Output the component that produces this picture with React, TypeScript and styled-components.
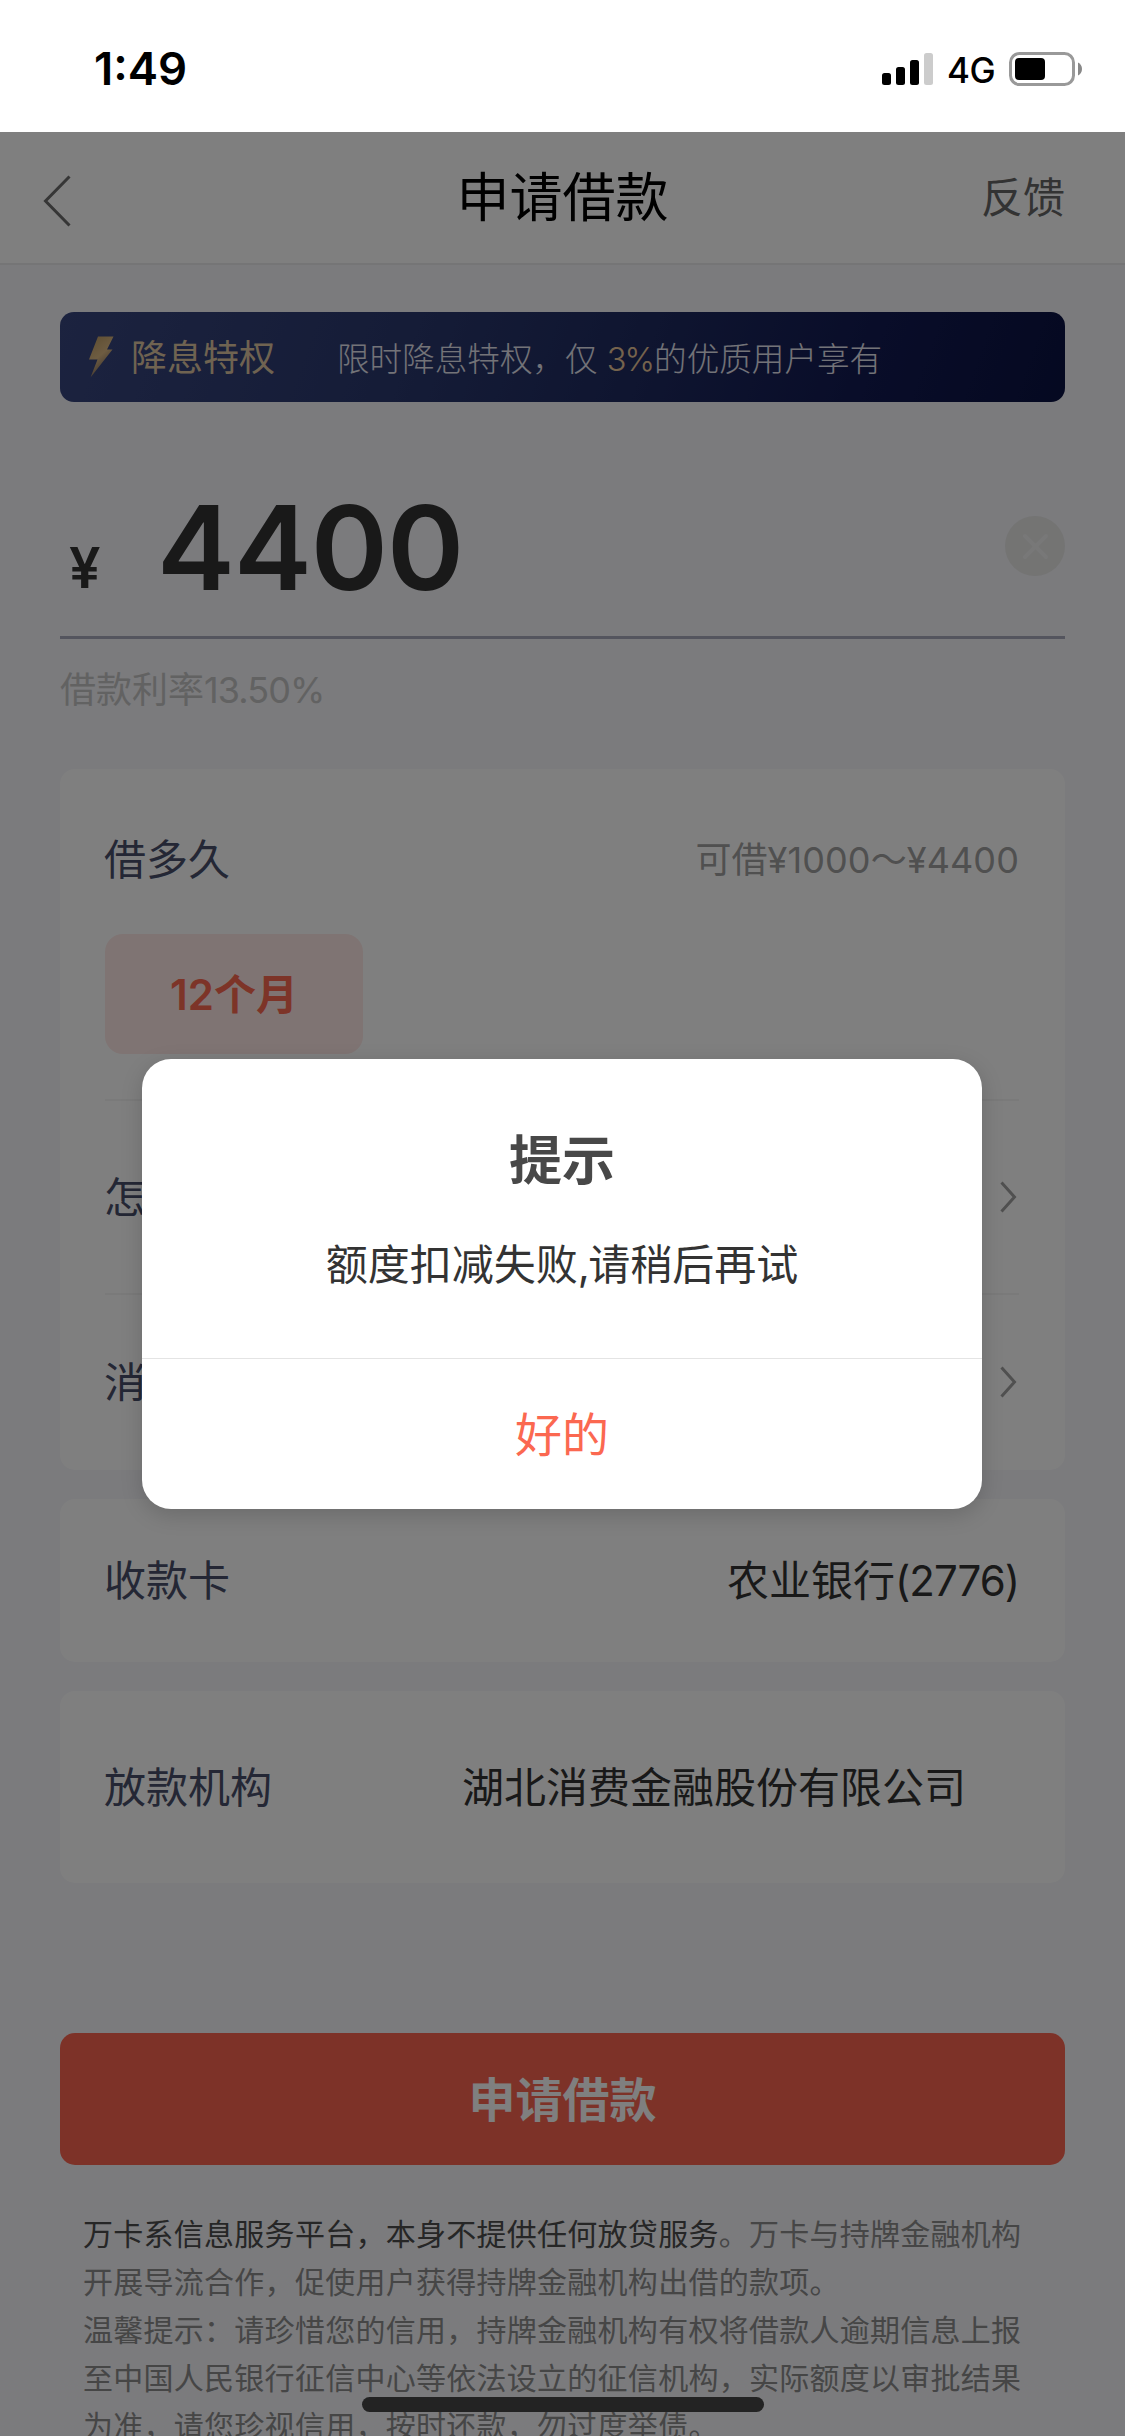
import React from 'react';
import styled, { createGlobalStyle } from 'styled-components';

const GlobalStyle = createGlobalStyle`
  * { box-sizing: border-box; }
  html, body { margin: 0; padding: 0; }
  body {
    width: 1125px;
    height: 2436px;
    overflow: hidden;
    font-family: Inter, "Noto Sans CJK SC", sans-serif;
  }
  button { font: inherit; border: 0; padding: 0; background: none; }
`;

const Screen = styled.div`
  position: relative;
  display: flex;
  flex-direction: column;
  width: 1125px;
  height: 2436px;
  overflow: hidden;
  background: #f6f6fa;
`;

const StatusBar = styled.header`
  flex: none;
  height: 132px;
  padding: 6px 43px 0 94px;
  background: #fff;
  display: flex;
  align-items: center;
  justify-content: space-between;
`;

const Clock = styled.span`
  font-size: 45.5px;
  font-weight: 600;
  line-height: 54px;
  color: #000;
`;

const StatusIcons = styled.div`
  display: flex;
  align-items: center;
  height: 34px;
`;

const Network = styled.span`
  margin: 0 13px 0 14px;
  width: 49px;
  font-size: 35px;
  font-weight: 500;
  letter-spacing: -0.5px;
  line-height: 36px;
  padding-top: 2px;
  white-space: nowrap;
  color: #000;
`;

const NavBar = styled.nav`
  flex: none;
  display: grid;
  grid-template-columns: 160px 1fr 160px;
  align-items: center;
  height: 133px;
  padding: 0 60px 0 43px;
  background: #fff;
  border-bottom: 2px solid #eaeaec;
`;

const BackButton = styled.button`
  justify-self: start;
  height: 52px;
  margin-top: 6px;
  svg { display: block; }
`;

const NavTitle = styled.h1`
  margin: 0 0 0 17px;
  text-align: center;
  font-size: 53px;
  font-weight: 400;
  line-height: 60px;
  color: #000;
`;

const NavLink = styled.button`
  justify-self: end;
  font-size: 42px;
  line-height: 60px;
  color: #666;
`;

const Content = styled.main`
  flex: 1;
  display: flex;
  flex-direction: column;
  padding: 47px 60px 0;
`;

const Banner = styled.section`
  flex: none;
  display: flex;
  align-items: center;
  height: 90px;
  padding-left: 29px;
  border-radius: 14px;
  background: linear-gradient(110deg, #38467f 0%, #2a386e 35%, #1e2a60 58%, #121a52 80%, #0a1242 100%);
`;

const BannerTitle = styled.strong`
  width: 206px;
  margin: 2px 0 0 17px;
  font-size: 36px;
  line-height: 48px;
  font-weight: 400;
  color: #dfc6a2;
`;

const BannerText = styled.span`
  margin-top: 3px;
  font-size: 32.6px;
  font-weight: 300;
  line-height: 48px;
  color: #e6e6f0;
  white-space: nowrap;
  em { font-style: normal; letter-spacing: -2px; margin-right: 1px; color: #eac79a; }
`;

const AmountRow = styled.section`
  flex: none;
  display: flex;
  align-items: flex-end;
  height: 237px;
  padding-left: 9px;
  border-bottom: 3px solid #a9abbd;
  color: #333;
`;

const Currency = styled.span`
  width: 88px;
  font-size: 56px;
  font-weight: 600;
  line-height: 64px;
  margin-bottom: 36px;
`;

const Amount = styled.span`
  flex: 1;
  font-size: 117px;
  font-weight: 600;
  line-height: 140px;
  margin-bottom: 18px;
  letter-spacing: -1px;
`;

const ClearButton = styled.button`
  width: 60px;
  height: 60px;
  margin-bottom: 60px;
  svg { display: block; }
`;

const Rate = styled.p`
  flex: none;
  margin: 24px 0 0;
  height: 106px;
  font-size: 36px;
  line-height: 54px;
  color: #c4c4c4;
`;

const Digits = styled.span<{ $tracking: number }>`
  letter-spacing: ${(p) => p.$tracking}px;
`;

const Card = styled.section<{ $height: number }>`
  flex: none;
  height: ${(p) => p.$height}px;
  margin-bottom: 29px;
  padding: 0 46px 0 45px;
  border-radius: 15px;
  background: #fff;
`;

const Row = styled.div<{ $height: number; $divided?: boolean }>`
  display: flex;
  align-items: center;
  justify-content: space-between;
  height: ${(p) => p.$height}px;
  border-bottom: ${(p) => (p.$divided ? '2px solid #f4f4f4' : '0')};
  svg { margin-right: 2px; }
`;

const TermBlock = styled.div`
  height: 332px;
  padding-top: 59px;
  border-bottom: 2px solid #f4f4f4;
`;

const Label = styled.span`
  margin-left: -1px;
  padding-top: 1px;
  font-size: 42px;
  line-height: 62px;
  color: #484e6a;
`;

const Value = styled.span<{ $inset?: number }>`
  padding-top: 1px;
  font-size: 42px;
  line-height: 62px;
  margin-right: ${(p) => p.$inset ?? 0}px;
  color: #333;
`;

const Hint = styled.span`
  padding-top: 2px;
  font-size: 36px;
  letter-spacing: 0.1px;
  line-height: 54px;
  color: #a0a0a0;
`;

const TermChip = styled.button`
  display: block;
  width: 258px;
  height: 120px;
  margin-top: 44px;
  border-radius: 18px;
  background: #ffe8e6;
  color: #fb6850;
  font-size: 42px;
  font-weight: 600;
  line-height: 121px;
`;

const SubmitButton = styled.button`
  flex: none;
  height: 132px;
  margin-top: 121px;
  border-radius: 15px;
  background: #fb6450;
  color: #fff;
  font-size: 47px;
  font-weight: 600;
  line-height: 133px;
`;

const Terms = styled.p`
  flex: none;
  margin: 45px 0 0;
  padding-left: 23px;
  font-size: 30px;
  letter-spacing: 0.27px;
  line-height: 48px;
  color: #8c8c8c;
  white-space: nowrap;
  b { font-weight: 400; color: #4c4c4c; }
`;

const Mask = styled.div`
  position: absolute;
  inset: 132px 0 0;
  display: flex;
  justify-content: center;
  align-items: flex-start;
  padding: 927px 1px 0 0;
  background: rgba(0, 0, 0, 0.5);
`;

const Dialog = styled.div`
  display: flex;
  flex-direction: column;
  width: 840px;
  height: 450px;
  border-radius: 29px;
  background: #fff;
  box-shadow: 0 6px 22px rgba(0, 0, 0, 0.16);
  text-align: center;
`;

const DialogTitle = styled.h2`
  margin: 67px 0 0;
  font-size: 53px;
  font-weight: 700;
  line-height: 70px;
  color: #484848;
`;

const DialogText = styled.p`
  flex: 1;
  margin: 38px 0 0;
  font-size: 42px;
  line-height: 62px;
  color: #333;
`;

const DialogButton = styled.button`
  height: 151px;
  border-top: 1px solid #e4e4e4;
  font-size: 47px;
  line-height: 149px;
  color: #fb6850;
`;

const HomeIndicator = styled.div`
  position: absolute;
  left: 362px;
  top: 2397px;
  width: 402px;
  height: 15px;
  border-radius: 8px;
  background: #232323;
`;

const SignalIcon = () => (
  <svg width="51" height="34" viewBox="0 0 51 34">
    <rect x="0" y="21" width="9" height="12" rx="2.5" />
    <rect x="14" y="15" width="9" height="18" rx="2.5" />
    <rect x="28" y="8" width="9" height="25" rx="2.5" />
    <rect x="42" y="1" width="9" height="32" rx="2.5" fill="#ccc" />
  </svg>
);

const BatteryIcon = () => (
  <svg width="73" height="34" viewBox="0 0 73 34">
    <rect x="1.5" y="1.5" width="63" height="31" rx="9" fill="none" stroke="#999" strokeWidth="3" />
    <rect x="6" y="6" width="30" height="22" rx="4" />
    <path d="M69 10.5c2.3 1 4 3.5 4 6.5s-1.7 5.500-4 6.500z" fill="#888" />
  </svg>
);

const BackIcon = () => (
  <svg width="28" height="52" viewBox="0 0 28 52" fill="none" stroke="#6c6c6c" strokeWidth="3">
    <path d="M26.5 1.5 2.5 26l24 24.5" />
  </svg>
);

const BoltIcon = () => (
  <svg width="25" height="42" viewBox="0 0 25 42">
    <defs>
      <linearGradient id="bolt" x1="0" y1="0" x2="0.5" y2="1">
        <stop offset="0" stopColor="#b89860" />
        <stop offset="0.55" stopColor="#dcb984" />
        <stop offset="1" stopColor="#706058" />
      </linearGradient>
    </defs>
    <path d="M9 .5H24.500L18 13.500H23.500L1.500 41.500 8.500 23.500H0z" fill="url(#bolt)" />
  </svg>
);

const ClearIcon = () => (
  <svg width="60" height="60" viewBox="0 0 60 60">
    <circle cx="30" cy="30" r="30" fill="#e8e8e7" />
    <path d="M20 20l21 21M41 20 20 41" stroke="#f1f1f1" strokeWidth="4" strokeLinecap="round" />
  </svg>
);

const ArrowIcon = () => (
  <svg width="17" height="32" viewBox="0 0 17 32" fill="none" stroke="#a0a0a0" strokeWidth="3">
    <path d="M1.500 1.500 14.500 16l-13 14.500" />
  </svg>
);

export default function App() {
  return (
    <>
      <GlobalStyle />
      <Screen>
        <StatusBar>
          <Clock>1:49</Clock>
          <StatusIcons>
            <SignalIcon />
            <Network>4G</Network>
            <BatteryIcon />
          </StatusIcons>
        </StatusBar>
        <NavBar>
          <BackButton aria-label="返回"><BackIcon /></BackButton>
          <NavTitle>申请借款</NavTitle>
          <NavLink>反馈</NavLink>
        </NavBar>
        <Content>
          <Banner>
            <BoltIcon />
            <BannerTitle>降息特权</BannerTitle>
            <BannerText>限时降息特权，仅 <em>3%</em>的优质用户享有</BannerText>
          </Banner>
          <AmountRow>
            <Currency>¥</Currency>
            <Amount>4400</Amount>
            <ClearButton aria-label="清除"><ClearIcon /></ClearButton>
          </AmountRow>
          <Rate>借款利率<Digits $tracking={-0.9}>13.50%</Digits></Rate>
          <Card $height={701}>
            <TermBlock>
              <Row $height={62}>
                <Label>借多久</Label>
                <Hint>可借¥1000～¥4400</Hint>
              </Row>
              <TermChip>12个月</TermChip>
            </TermBlock>
            <Row $height={194} $divided>
              <Label>怎么还</Label>
              <ArrowIcon />
            </Row>
            <Row $height={174}>
              <Label>消费用途</Label>
              <ArrowIcon />
            </Row>
          </Card>
          <Card $height={163}>
            <Row $height={163}>
              <Label>收款卡</Label>
              <Value>农业银行<Digits $tracking={-1}>(2776)</Digits></Value>
            </Row>
          </Card>
          <Card $height={192}>
            <Row $height={192}>
              <Label>放款机构</Label>
              <Value $inset={53}>湖北消费金融股份有限公司</Value>
            </Row>
          </Card>
          <SubmitButton>申请借款</SubmitButton>
          <Terms>
            <b>万卡系信息服务平台，本身不提供任何放贷服务</b>。万卡与持牌金融机构
            <br />
            开展导流合作，促使用户获得持牌金融机构出借的款项。
            <br />
            温馨提示：请珍惜您的信用，持牌金融机构有权将借款人逾期信息上报
            <br />
            至中国人民银行征信中心等依法设立的征信机构，实际额度以审批结果
            <br />
            为准，请您珍视信用，按时还款，勿过度举债。
          </Terms>
        </Content>
        <Mask>
          <Dialog role="dialog">
            <DialogTitle>提示</DialogTitle>
            <DialogText>额度扣减失败<Digits $tracking={-1.5}>,</Digits>请稍后再试</DialogText>
            <DialogButton>好的</DialogButton>
          </Dialog>
        </Mask>
        <HomeIndicator />
      </Screen>
    </>
  );
}
